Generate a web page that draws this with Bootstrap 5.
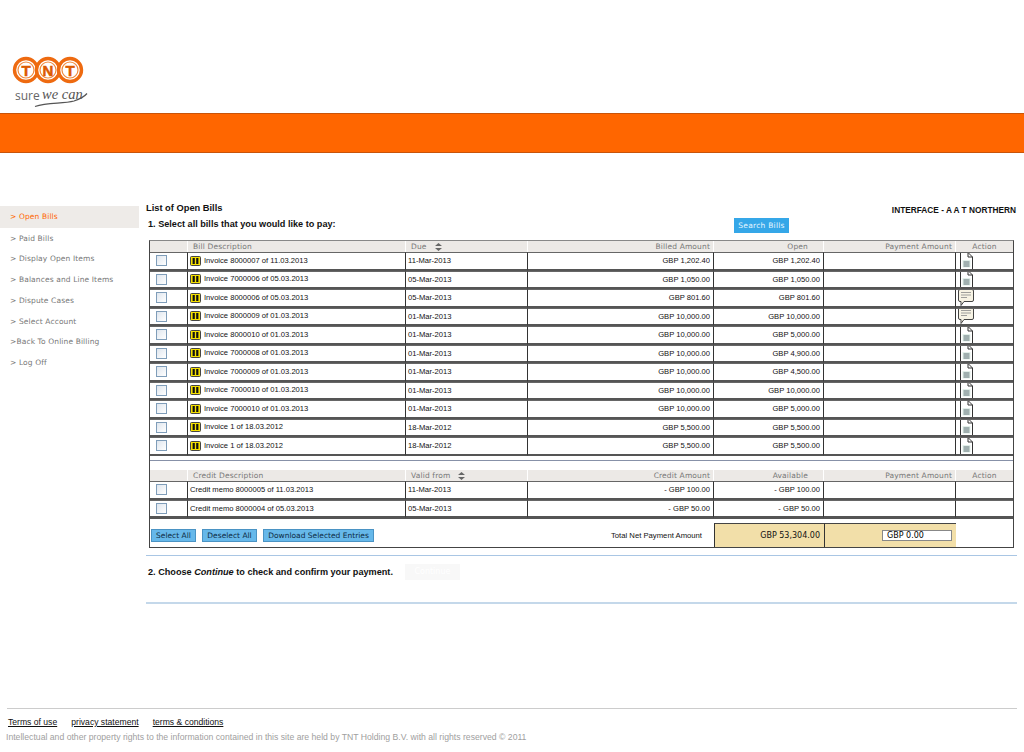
<!DOCTYPE html>
<html lang="en">
<head>
  <meta charset="UTF-8">
  <title>List of Open Bills</title>
  <link href="https://cdn.jsdelivr.net/npm/bootstrap@5.3.0/dist/css/bootstrap.min.css" rel="stylesheet">
  <style>
    html, body { height: 752px; overflow: hidden; }
    body { background: #fff; color: #111; font-family: "DejaVu Sans", sans-serif; font-size: 8px; }
    .logo-area { height: 113px; padding: 55px 0 0 12px; }
    .orange-bar { height: 40px; background: #ff6600; border-top: 1px solid #c8540a; border-bottom: 1px solid #c8540a; }
    .page-body { margin-top: 53px; }
    .side-col { width: 139px; flex: none; }
    .side-link { display: block; height: 20.75px; line-height: 21px; padding: 0 0 0 10px; color: #777; font-size: 7.5px; letter-spacing: .12px; text-decoration: none; }
    .side-link.current { background: #eeebe8; color: #ff6600; height: 21.5px; }
    .main-col { width: 871px; margin: -6px 0 0 7px; flex: none; }
    .page-title { font: bold 9.3px "Liberation Sans", sans-serif; line-height: 12px; margin: 0; padding-top: 2px; }
    .customer { font: bold 8.3px "Liberation Sans", sans-serif; padding-top: 5px; margin-right: 1px; }
    .step-text { font: bold 9.15px "Liberation Sans", sans-serif; margin: 0; }
    .search-row { height: 25px; position: relative; padding: 4px 0 0 2px; }
    .search-btn { background: #35a7e8; color: #e6f6ff; border: 0; border-radius: 0; font-size: 7.5px; letter-spacing: .25px; height: 15px; width: 55px; padding: 0; line-height: 15px; position: absolute; left: 588px; top: 3px; }
    .bills { table-layout: fixed; border-collapse: separate; border-spacing: 0; width: 865px; margin-left: 3px; border-right: 1px solid #444; border-left: 1px solid #444; border-bottom: 1px solid #444; border-top: 1px solid #888; font: 7.6px "Liberation Sans", sans-serif; }
    .bills td, .bills th { padding: 0; overflow: hidden; white-space: nowrap; }
    .head-row th { height: 11px; background: #ece9e6; color: #777; font: 7.5px "DejaVu Sans", sans-serif; letter-spacing: .15px; border-right: 1px solid #fff; line-height: 11px; }
    .bill-row td { height: 18.5px; border-top: 1px solid #666; border-bottom: 2px solid #555; border-right: 1px solid #333; vertical-align: middle; }
    .bill-row td:last-child, .head-row th:last-child { border-right: 0; }
    .pad-l { padding-left: 2px !important; }
    .pad-r { padding-right: 3px !important; text-align: right; }
    .box { display: block; width: 11px; height: 11px; margin: 0 0 0 6px; appearance: none; border: 1px solid #7f9db9; background: linear-gradient(135deg, #dfe6ee, #fff); border-radius: 0; }
    .gap-line td { height: 5.5px; border-bottom: 1px solid #8791a8; }
    .gap-space td { height: 9px; }
    .total-row td { height: 28.5px; vertical-align: middle; padding-top: 6px; border-top: 1px solid #555; }
    .total-row td.tot-cell { padding: 0; vertical-align: bottom; }
    .total-label { font-size: 7.7px; padding-right: 12px !important; }
    .tot-amt { height: 24px; background: #f2dfa9; border-top: 1px solid #444; border-left: 1px solid #333; font: 8px "DejaVu Sans", sans-serif; }
    .btn-line { column-gap: 6.5px; margin-left: -1px; }
    .small-btn { background: #66b8ea; color: #0c2a44; border: 1px solid #4a93c4; border-radius: 0; font: 7.5px "DejaVu Sans", sans-serif; height: 13px; line-height: 11px; padding: 0 4px; }
    .sum-input { width: 70px; height: 11px; border: 1px solid #888; background: #fff; font: 8px "DejaVu Sans", sans-serif; padding: 0 0 0 4px; margin-left: 57px; display: block; }
    .rule { height: 1px; background: #a9c6e4; margin: 0; opacity: 1; border: 0; }
    .rule-thick { height: 2px; background: #c4d8ea; }
    .step-two { height: 46px; padding: 0 0 14px 2px; }
    .continue-btn { background: #f8f8f8; color: #fff; border: 0; border-radius: 0; width: 55px; height: 16px; font-size: 8px; padding: 0; margin-left: 12px; }
    .doc-icon { display: block; margin: -2px 0 -2px 4px; }
    .foot-area { position: absolute; top: 708px; left: 7px; width: 1010px; border-top: 1px solid #ccc; }
    .foot-link { font: 8.6px "Liberation Sans", sans-serif; color: #111; margin-right: 11.5px; }
    .foot-links { padding: 8px 0 0 1px; line-height: 10px; }
    .copy { font: 8.67px "Liberation Sans", sans-serif; color: #a0a0a0; margin: 4px 0 0 -1px; line-height: 11px; }
    .warn { display: inline-block; vertical-align: middle; margin-right: 3px; }
  </style>
</head>
<body>

  <div class="logo-area">
    <svg width="80" height="54" viewBox="0 0 80 54" class="d-block">
      <g fill="#fff" stroke="#ee6a10" stroke-width="3.4">
        <circle cx="14" cy="15" r="11.5"/><circle cx="36" cy="15" r="11.5"/><circle cx="58" cy="15" r="11.5"/>
      </g>
      <g fill="none" stroke="#f08a3e" stroke-width="1.2">
        <circle cx="14" cy="15" r="8"/><circle cx="36" cy="15" r="8"/><circle cx="58" cy="15" r="8"/>
      </g>
      <g font-family="Liberation Sans, sans-serif" font-weight="bold" font-size="15" fill="#dc5a00" text-anchor="middle" stroke="#dc5a00" stroke-width=".5">
        <text x="14" y="20.5">T</text><text x="36" y="20.5">N</text><text x="58" y="20.5">T</text>
      </g>
      <text x="3" y="44.5" font-family="Open Sans, sans-serif" font-size="12" fill="#666">sure</text>
      <text x="30" y="43.5" font-family="Liberation Serif, serif" font-style="italic" font-size="14.5" fill="#555">we can</text>
      <path d="M23 51.5 C36 47 50 49 62 46 C68 44 72 42 75 38.5" fill="none" stroke="#555" stroke-width="1.2"/>
    </svg>
  </div>
  <div class="orange-bar"></div>

  <div class="page-body d-flex">
    <nav class="side-col pt-0">
      <a class="side-link current" href="#">&gt; Open Bills</a>
      <a class="side-link" href="#">&gt; Paid Bills</a>
      <a class="side-link" href="#">&gt; Display Open Items</a>
      <a class="side-link" href="#">&gt; Balances and Line Items</a>
      <a class="side-link" href="#">&gt; Dispute Cases</a>
      <a class="side-link" href="#">&gt; Select Account</a>
      <a class="side-link" href="#">&gt;Back To Online Billing</a>
      <a class="side-link" href="#">&gt; Log Off</a>
    </nav>

    <div class="main-col">
      <div class="d-flex justify-content-between">
        <h1 class="page-title">List of Open Bills</h1>
        <div class="customer">INTERFACE - A A T NORTHERN</div>
      </div>
      <div class="search-row">
        <p class="step-text">1. Select all bills that you would like to pay:</p>
        <button class="btn search-btn" type="button">Search Bills</button>
      </div>

      <table class="bills">
        <colgroup>
          <col style="width:38px"><col style="width:218px"><col style="width:122px"><col style="width:186px"><col style="width:110px"><col style="width:132px"><col>
        </colgroup>
        <tbody id="openBills"></tbody>
        <tbody>
          <tr class="gap-line"><td colspan="7"></td></tr>
          <tr class="gap-space"><td colspan="7"></td></tr>
        </tbody>
        <tbody id="credits"></tbody>
        <tbody>
          <tr class="total-row">
            <td colspan="3" class="pad-l">
              <div class="d-flex btn-line">
                <button class="btn small-btn" type="button">Select All</button>
                <button class="btn small-btn" type="button">Deselect All</button>
                <button class="btn small-btn" type="button">Download Selected Entries</button>
              </div>
            </td>
            <td class="text-end total-label">Total Net Payment Amount</td>
            <td class="tot-cell"><div class="tot-amt d-flex align-items-center justify-content-end pe-1">GBP 53,304.00</div></td>
            <td class="tot-cell"><div class="tot-amt d-flex align-items-center"><input class="sum-input" type="text" value="GBP 0.00"></div></td>
            <td></td>
          </tr>
        </tbody>
      </table>

      <hr class="rule" style="margin-top:7px">
      <div class="step-two d-flex align-items-center">
        <p class="step-text">2. Choose <em>Continue</em> to check and confirm your payment.</p>
        <button class="btn continue-btn" type="button">Continue</button>
      </div>
      <hr class="rule rule-thick">
    </div>
  </div>

  <div class="foot-area">
    <div class="foot-links">
      <a class="foot-link" href="#">Terms of use</a>
      <a class="foot-link" href="#">privacy statement</a>
      <a class="foot-link" href="#">terms &amp; conditions</a>
    </div>
    <p class="copy">Intellectual and other property rights to the information contained in this site are held by TNT Holding B.V. with all rights reserved © 2011</p>
  </div>

  <script>
    const sortIcon = `<svg width="7" height="8" viewBox="0 0 7 8" class="ms-2"><path d="M3.5 0 L7 3 H0 Z M3.5 8 L7 5 H0 Z" fill="#666"/></svg>`;
    const warnIcon = `<svg class="warn" width="11" height="10" viewBox="0 0 11 10"><rect x=".5" y=".5" width="10" height="9" rx="1" fill="#f5e000" stroke="#444"/><rect x="2.6" y="2" width="2.2" height="6" fill="#111"/><rect x="6.2" y="2" width="2.2" height="6" fill="#111"/></svg>`;
    const docIcon = `<svg class="doc-icon" width="13" height="18" viewBox="0 0 13 18"><path d="M.5 .5 H8 L12.5 5 V17.5 H.5 Z" fill="#fff" stroke="#333"/><path d="M8 .5 V5 H12.5" fill="none" stroke="#333"/><rect x="2.5" y="8" width="8" height="7.5" fill="#e2efe9"/><path d="M3.5 10 H9.5 M3.5 12 H9.5 M3.5 14 H9.5" stroke="#3f5058" stroke-width=".8"/></svg>`;
    const noteIcon = `<svg class="doc-icon" style="margin-left:2px" width="16" height="18" viewBox="0 0 16 18"><path d="M2 .5 H14 Q15.5 .5 15.5 2 V11 Q15.5 12.5 14 12.5 H6 L3 16.5 V12.5 H2 Q.5 12.5 .5 11 V2 Q.5 .5 2 .5 Z" fill="#f7f3e4" stroke="#444"/><path d="M3 3.5 H13 M3 6 H13 M3 8.5 H9" stroke="#888" stroke-width=".8"/></svg>`;

    const bills = [
      ["Invoice 8000007 of 11.03.2013", "11-Mar-2013", "GBP 1,202.40", "GBP 1,202.40", docIcon],
      ["Invoice 7000006 of 05.03.2013", "05-Mar-2013", "GBP 1,050.00", "GBP 1,050.00", docIcon],
      ["Invoice 8000006 of 05.03.2013", "05-Mar-2013", "GBP 801.60", "GBP 801.60", noteIcon],
      ["Invoice 8000009 of 01.03.2013", "01-Mar-2013", "GBP 10,000.00", "GBP 10,000.00", noteIcon],
      ["Invoice 8000010 of 01.03.2013", "01-Mar-2013", "GBP 10,000.00", "GBP 5,000.00", docIcon],
      ["Invoice 7000008 of 01.03.2013", "01-Mar-2013", "GBP 10,000.00", "GBP 4,900.00", docIcon],
      ["Invoice 7000009 of 01.03.2013", "01-Mar-2013", "GBP 10,000.00", "GBP 4,500.00", docIcon],
      ["Invoice 7000010 of 01.03.2013", "01-Mar-2013", "GBP 10,000.00", "GBP 10,000.00", docIcon],
      ["Invoice 7000010 of 01.03.2013", "01-Mar-2013", "GBP 10,000.00", "GBP 5,000.00", docIcon],
      ["Invoice 1 of 18.03.2012", "18-Mar-2012", "GBP 5,500.00", "GBP 5,500.00", docIcon],
      ["Invoice 1 of 18.03.2012", "18-Mar-2012", "GBP 5,500.00", "GBP 5,500.00", docIcon]
    ];
    const credits = [
      ["Credit memo 8000005 of 11.03.2013", "11-Mar-2013", "- GBP 100.00", "- GBP 100.00", ""],
      ["Credit memo 8000004 of 05.03.2013", "05-Mar-2013", "- GBP 50.00", "- GBP 50.00", ""]
    ];

    function headRow(desc, date, amount, open) {
      return `<tr class="head-row">
        <th></th><th style="padding-left:5px">${desc}</th><th style="padding-left:5px">${date}${sortIcon}</th>
        <th class="pad-r">${amount}</th><th class="pad-r" style="padding-right:15px!important">${open}</th>
        <th class="pad-r">Payment Amount</th><th class="text-center">Action</th></tr>`;
    }

    function bodyRow(r, icon) {
      return `<tr class="bill-row">
        <td><input class="box" type="checkbox"></td>
        <td class="pad-l">${icon}${r[0]}</td><td class="pad-l">${r[1]}</td>
        <td class="pad-r">${r[2]}</td><td class="pad-r">${r[3]}</td><td></td><td>${r[4]}</td></tr>`;
    }

    document.getElementById("openBills").innerHTML =
      headRow("Bill Description", "Due", "Billed Amount", "Open") + bills.map(b => bodyRow(b, warnIcon)).join("");
    document.getElementById("credits").innerHTML =
      headRow("Credit Description", "Valid from", "Credit Amount", "Available") + credits.map(c => bodyRow(c, "")).join("");
  </script>
  <script src="https://cdn.jsdelivr.net/npm/bootstrap@5.3.0/dist/js/bootstrap.bundle.min.js"></script>
</body>
</html>
